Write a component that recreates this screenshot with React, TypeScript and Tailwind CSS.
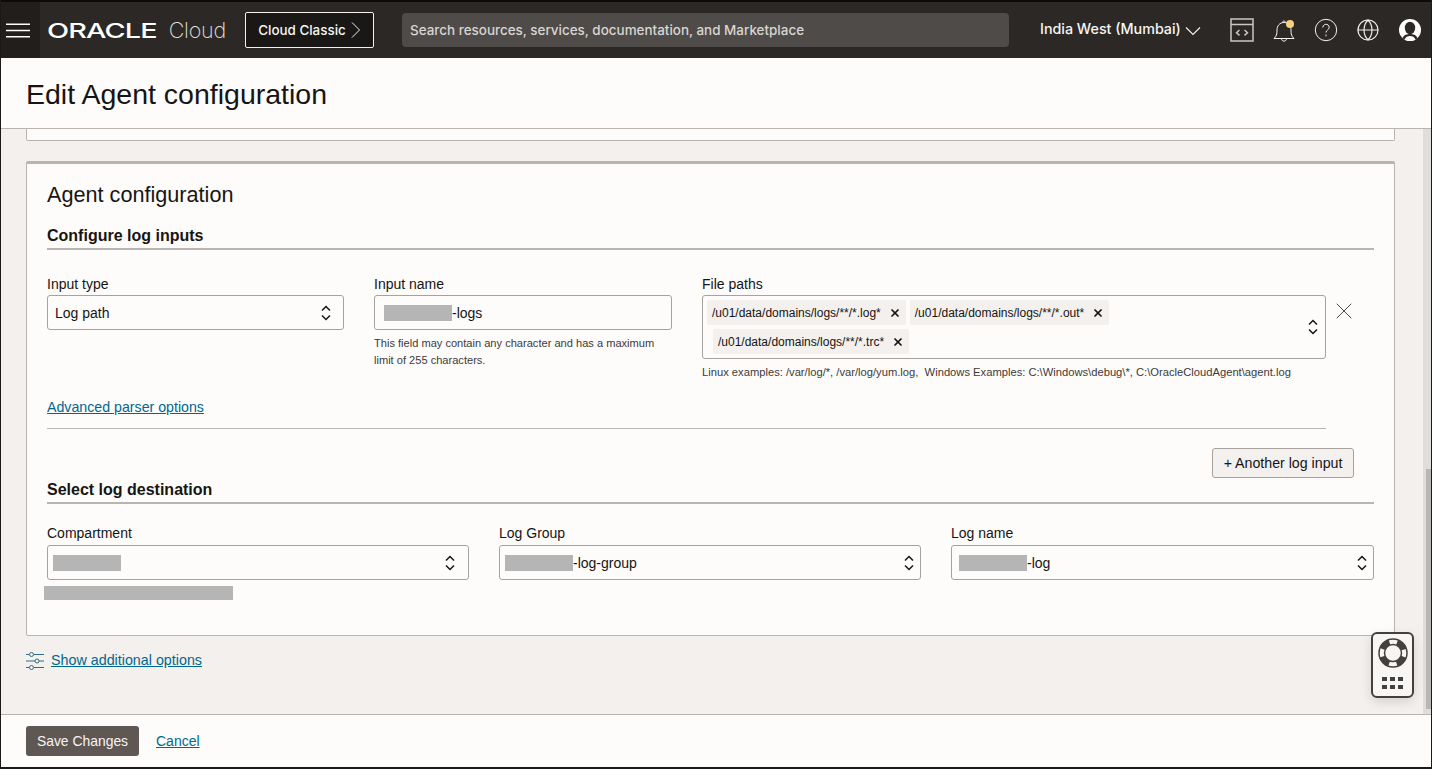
import { Globe, X } from "lucide-react";

const sans = "font-['Liberation_Sans',Arial,sans-serif]";

function Updown({ className = "" }: { className?: string }) {
  return (
    <svg width="10" height="16" viewBox="0 0 10 16" fill="none" stroke="#161513" strokeWidth="1.5" className={className}>
      <path d="M1 5.500 5 1.500l4 4M1 10.500l4 4 4-4" />
    </svg>
  );
}

function Redacted({ w, h = 16 }: { w: number; h?: number }) {
  return <span className="inline-block bg-[#b5b5b5] align-middle" style={{ width: w, height: h }} />;
}

function FieldLabel({ children, gap = "mb-[2px]" }: { children: React.ReactNode; gap?: string }) {
  return <div className={`h-[18px] text-[14px] leading-[18px] text-[#161513] ${gap}`}>{children}</div>;
}

function SelectBox({ children, pad = "pl-[7px]", arrowRight = "pr-[12px]" }: { children: React.ReactNode; pad?: string; arrowRight?: string }) {
  return (
    <div className={`flex h-[35px] items-center justify-between rounded-[3px] border border-[#a8a29e] bg-[#fdfcfb] text-[14px] text-[#161513] ${pad} ${arrowRight}`}>
      <span className="flex items-center pt-[1px]">{children}</span>
      <Updown />
    </div>
  );
}

function Chip({ text, className = "" }: { text: string; className?: string }) {
  return (
    <span className={`flex h-[25px] items-center rounded-[2px] bg-[#f3f0ee] pl-[5px] pr-[5px] text-[12px] text-[#161513] ${className}`}>
      {text}
      <X size={12} strokeWidth={3.5} className="ml-[8px] text-[#161513]" />
    </span>
  );
}

function SectionTitle({ children }: { children: React.ReactNode }) {
  return (
    <div className="h-[23px] border-b-2 border-[#b9b4af] text-[16px] font-bold leading-[18px] text-[#161513]">{children}</div>
  );
}

function Header() {
  return (
    <header className="flex h-[58px] shrink-0 items-center border-t-2 border-[#0c0b0a] bg-[#2b2826] font-['Inter',sans-serif] text-[#f7f5f3]">
      <div className="flex h-full w-[39px] items-center bg-[#211e1c] pl-[5px]">
        <svg width="24" height="15" viewBox="0 0 24 15" stroke="#fff" strokeWidth="1.6">
          <path d="M0 1.200h24M0 7.500h24M0 13.800h24" />
        </svg>
      </div>
      <div className="ml-[7px] mt-[2px] flex w-[179px] items-center">
        <span className="inline-block w-[122px] origin-left scale-x-[1.44] text-[20px] font-medium leading-none tracking-[-0.6px] text-white">ORACLE</span>
        <span className="text-[21.5px] font-extralight leading-none tracking-[-0.2px] text-[#e2e0de]">Cloud</span>
      </div>
      <div className="ml-[19px] flex h-[36px] w-[129px] items-center justify-center rounded-[2px] border border-[#f4f2f0] bg-[#1a1816] text-[13.4px] font-medium">
        Cloud Classic
        <svg width="10" height="18" viewBox="0 0 10 18" fill="none" stroke="#f4f2f0" strokeWidth="1" className="ml-[5px]">
          <path d="M1 1.500 8.500 9 1 16.500" />
        </svg>
      </div>
      <div className="ml-[28px] flex h-[34px] w-[607px] items-center rounded-[4px] bg-[#4f4b48] pl-[8px] text-[13.45px] font-medium text-[#d9d6d3]">
        Search resources, services, documentation, and Marketplace
      </div>
      <div className="mb-[2px] ml-[31px] flex items-center text-[14.3px] font-medium">
        India West (Mumbai)
        <svg width="16" height="10" viewBox="0 0 16 10" fill="none" stroke="#f4f2f0" strokeWidth="1.100" className="ml-[4px] mt-[3px]">
          <path d="M1 1.500 8 8.500l7-7" />
        </svg>
      </div>
      <svg width="24" height="24" viewBox="0 0 24 24" fill="none" stroke="#c9c7c5" strokeWidth="1.500" className="ml-[29px]">
        <rect x="1" y="1" width="22" height="22" />
        <path d="M1 6.500h22M9.500 12l-3 2.700 3 2.700M14.500 12l3 2.700-3 2.700" />
      </svg>
      <svg width="24" height="26" viewBox="0 0 24 26" fill="none" stroke="#f4f2f0" strokeWidth="1" className="ml-[18px]">
        <path d="M2 21.500c2.500-2.500 3-4 3-8.500 0-4 2.500-7.500 7-7.500s7 3.500 7 7.500c0 4.500.5 6 3 8.500zM10.500 5.500c0-2 3-2 3 0M9.500 21.500c0 3.500 5 3.500 5 0" />
        <circle cx="18" cy="7" r="4" fill="#f7d27e" stroke="none" />
      </svg>
      <svg width="24" height="24" viewBox="0 0 24 24" fill="none" stroke="#f4f2f0" strokeWidth="1" className="ml-[18px]">
        <circle cx="12" cy="12" r="10.700" />
        <path d="M8.800 9.500c0-4.200 6.400-4.200 6.400-.2 0 2.700-3.200 2.600-3.200 5.200M12 16.500v1.800" />
      </svg>
      <Globe size={24} strokeWidth={1.15} className="ml-[18px] text-[#f4f2f0]" />
      <svg width="24" height="24" viewBox="0 0 24 24" className="ml-[18px]">
        <circle cx="12" cy="12" r="11" fill="#fff" />
        <ellipse cx="12" cy="10" rx="5.200" ry="6.200" fill="#2b2826" />
        <path d="M4.500 20c1.500-3.200 4.500-4 7.500-4s6 .8 7.500 4l-2 1.800h-11z" fill="#2b2826" />
        <path d="M6.500 21.500c1-2.500 3-3.500 5.500-3.500s4.500 1 5.500 3.500c-3 2-8 2-11 0z" fill="#fff" />
      </svg>
    </header>
  );
}

function AgentCard() {
  return (
    <section className="mr-[28px] mt-[20px] h-[475px] rounded-[2px] border border-t-[3px] border-[#b9b4af] bg-[#fdfcfb] pl-[20px] pr-[20px] pt-[15px]">
      <h2 className="h-[32px] text-[21.65px] leading-[32px] text-[#161513]">Agent configuration</h2>
      <div className="mt-[16px]">
        <SectionTitle>Configure log inputs</SectionTitle>
      </div>

      <div className="mt-[25px] flex gap-[30px]">
        <div className="w-[297px]">
          <FieldLabel>Input type</FieldLabel>
          <SelectBox>Log path</SelectBox>
        </div>
        <div className="w-[298px]">
          <FieldLabel>Input name</FieldLabel>
          <div className="flex h-[35px] items-center rounded-[3px] border border-[#a8a29e] bg-[#fdfcfb] pl-[9px] pt-[1px] text-[14px] text-[#161513]">
            <Redacted w={68} />
            -logs
          </div>
          <p className="mt-[5px] text-[11.08px] leading-[17px] text-[#3d3a38]">
            This field may contain any character and has a maximum limit of 255 characters.
          </p>
        </div>
        <div className="w-[624px]">
          <FieldLabel>File paths</FieldLabel>
          <div className="relative h-[64px] rounded-[3px] border border-[#a8a29e] bg-[#fdfcfb] pl-[4px] pt-[4px]">
            <div className="flex gap-[4px]">
              <Chip text="/u01/data/domains/logs/**/*.log*" />
              <Chip text="/u01/data/domains/logs/**/*.out*" />
            </div>
            <div className="mt-[4px] flex pl-[6px]">
              <Chip text="/u01/data/domains/logs/**/*.trc*" />
            </div>
            <Updown className="absolute right-[7px] top-[23px]" />
          </div>
          <p className="mt-[5px] whitespace-pre text-[11.2px] leading-[17px] text-[#3d3a38]">
            {"Linux examples: /var/log/*, /var/log/yum.log,  Windows Examples: C:\\Windows\\debug\\*, C:\\OracleCloudAgent\\agent.log"}
          </p>
        </div>
        <X size={28} strokeWidth={0.85} className="ml-[-26px] mt-[22px] text-[#4b4845]" />
      </div>

      <div className="mr-[48px] mt-[14px] h-[34px] border-b border-[#b9b4af]">
        <a className="text-[14.2px] text-[#00688c] underline">Advanced parser options</a>
      </div>

      <div className="mr-[20px] mt-[19px] flex justify-end">
        <button className="h-[30px] w-[142px] rounded-[3px] border border-[#a8a29e] bg-[#f3f0ee] pt-[1px] text-[14.2px] text-[#161513]">+ Another log input</button>
      </div>

      <div className="mt-[3px]">
        <SectionTitle>Select log destination</SectionTitle>
      </div>

      <div className="mt-[20px] grid grid-cols-[422px_422px_423px] gap-[30px]">
        <div>
          <FieldLabel gap="mb-[3px]">Compartment</FieldLabel>
          <SelectBox pad="pl-[5px]" arrowRight="pr-[13px]"><Redacted w={68} /></SelectBox>
          <div className="ml-[-3px] mt-[6px] flex"><Redacted w={189} h={14} /></div>
        </div>
        <div>
          <FieldLabel gap="mb-[3px]">Log Group</FieldLabel>
          <SelectBox pad="pl-[5px]" arrowRight="pr-[6px]"><Redacted w={68} />-log-group</SelectBox>
        </div>
        <div>
          <FieldLabel gap="mb-[3px]">Log name</FieldLabel>
          <SelectBox arrowRight="pr-[6px]"><Redacted w={68} />-log</SelectBox>
        </div>
      </div>
    </section>
  );
}

export default function App() {
  return (
    <div className={`relative flex h-[769px] w-[1432px] flex-col overflow-hidden border-b-2 border-l border-r border-[#1a1a1a] bg-[#fdfcfb] ${sans}`}>
      <Header />

      <div className="flex h-[71px] shrink-0 items-center border-b border-[#b9b4af] pl-[25px] pt-[2px]">
        <h1 className="text-[28.5px] text-[#161513]">Edit Agent configuration</h1>
      </div>

      <div className="flex min-h-0 flex-1 bg-[#f3f0ee]">
        <main className="min-w-0 flex-1 pl-[25px]">
          <div className="mr-[28px] h-[12px] rounded-b-[2px] border border-t-0 border-[#b9b4af] bg-[#fdfcfb]" />
          <AgentCard />
          <div className="mt-[15px] flex h-[20px] items-center">
            <svg width="18" height="18" viewBox="0 0 18 18" fill="none" stroke="#2f6d85" strokeWidth="1">
              <path d="M0 2.500h3M8 2.500h10M0 9h9M13 9h5M0 15.500h3M8 15.500h10" />
              <circle cx="5.500" cy="2.500" r="2" />
              <circle cx="11" cy="9" r="2" />
              <circle cx="5.500" cy="15.500" r="2" />
            </svg>
            <a className="ml-[7px] text-[14.3px] text-[#00688c] underline">Show additional options</a>
          </div>
        </main>
        <div className="flex w-[8px] shrink-0 justify-end bg-[#e0dedb]">
          <div className="mt-[340px] h-[240px] w-[5px] bg-[#b9b7b5]" />
        </div>
      </div>

      <footer className="flex h-[53px] shrink-0 items-center border-t border-[#b9b4af] pl-[25px]">
        <button className="h-[30px] w-[113px] rounded-[3px] bg-[#5f5753] text-[13.9px] text-[#f7f5f3]">Save Changes</button>
        <a className="ml-[17px] text-[14px] text-[#00688c] underline">Cancel</a>
      </footer>

      <div className="absolute left-[1370px] top-[632px] flex h-[66px] w-[43px] flex-col items-center rounded-[6px] border-2 border-[#44403d] bg-[#f8f6f5] pt-[4px] shadow-[0_4px_12px_rgba(0,0,0,0.12)]">
        <svg width="30" height="30" viewBox="0 0 30 30" fill="none">
          <circle cx="15" cy="15" r="14" stroke="#44403d" strokeWidth="1.500" />
          <circle cx="15" cy="15" r="8.500" stroke="#44403d" strokeWidth="1.500" />
          <circle cx="15" cy="15" r="11.250" stroke="#44403d" strokeWidth="5.500" strokeDasharray="10 7.670" transform="rotate(19.500 15 15)" />
        </svg>
        <div className="mt-[9px] grid grid-cols-3 gap-x-[3px] gap-y-[4px]">
          {Array.from({ length: 6 }).map((_, i) => (
            <span key={i} className="h-[4px] w-[5px] bg-[#44403d]" />
          ))}
        </div>
      </div>
    </div>
  );
}
